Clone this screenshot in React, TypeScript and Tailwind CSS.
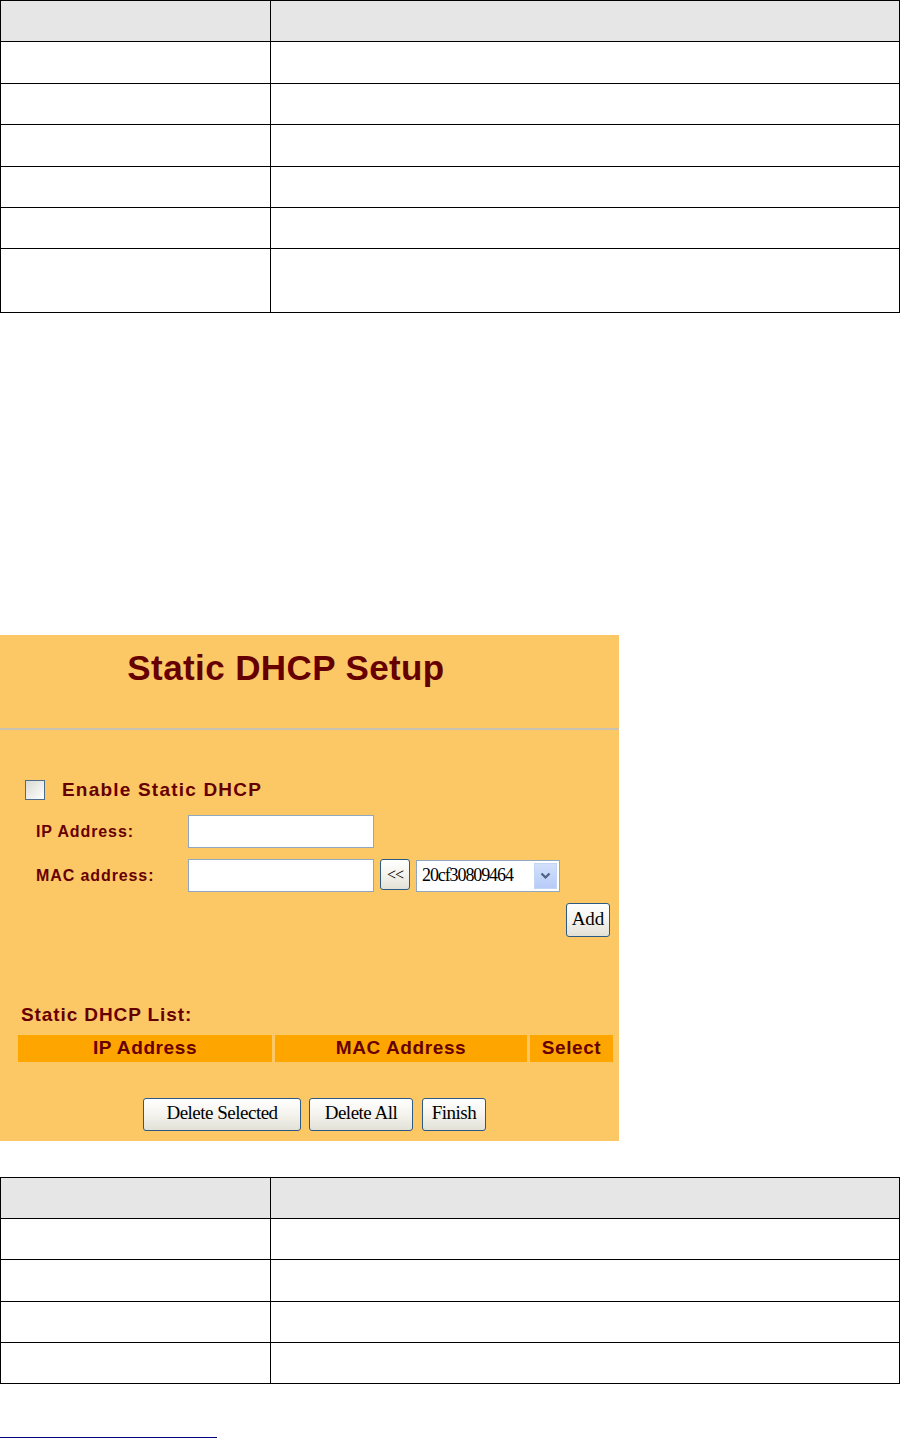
import React from "react";

// Empty two-column doc tables (text stripped in the screenshot)
type GridTableProps = {
  rows: string[]; // height classes, first is the header
};

const GridTable: React.FC<GridTableProps> = ({ rows }) => {
  return (
    <div className="w-[900px] border border-black">
      {rows.map((h, i) => (
        <div
          key={i}
          className={`flex ${h} ${i < rows.length - 1 ? "border-b border-black" : ""} ${
            i === 0 ? "bg-[#e6e6e6]" : "bg-white"
          }`}
        >
          <div className="w-[270px] shrink-0 border-r border-black" />
          <div className="flex-1" />
        </div>
      ))}
    </div>
  );
};

const XpButton: React.FC<{ label: string; className?: string }> = ({ label, className = "" }) => (
  <button
    type="button"
    className={`flex items-center justify-center rounded-[3px] border border-[#2d5a85] bg-gradient-to-b from-white via-[#f4f3ee] to-[#e3e1d6] text-black font-['Liberation_Serif',serif] leading-none ${className}`}
  >
    {label}
  </button>
);

const StaticDhcpPanel: React.FC = () => {
  const label = "text-[#660000] font-['Liberation_Sans',Arial,sans-serif] font-bold";

  return (
    <div className="w-[619px] h-[506px] bg-[#fcc866] flex flex-col">
      {/* title */}
      <div className="h-[93px] pt-[13px] pr-[47px] text-center">
        <h1 className={`${label} text-[35px] leading-[40px] tracking-[0.4px]`}>Static DHCP Setup</h1>
      </div>
      <div className="h-[2px] bg-[#c9c1b1]" />

      {/* enable */}
      <div className="mt-[50px] h-5 flex items-center pl-[25px]">
        <span className="w-5 h-5 border border-[#4b6d8d] bg-gradient-to-br from-[#d9d9d4] to-white" />
        <span className={`${label} ml-[17px] text-[19px] leading-[22px] tracking-[1.2px]`}>
          Enable Static DHCP
        </span>
      </div>

      {/* ip */}
      <div className="mt-[15px] h-[33px] flex items-center pl-[36px]">
        <span className={`${label} w-[152px] text-[16px] tracking-[0.9px]`}>IP Address:</span>
        <input className="w-[186px] h-[33px] border border-[#8fa7c0] bg-white outline-none" />
      </div>

      {/* mac */}
      <div className="mt-[11px] h-[33px] flex items-center pl-[36px]">
        <span className={`${label} w-[152px] text-[16px] tracking-[0.9px]`}>MAC address:</span>
        <input className="w-[186px] h-[33px] border border-[#8fa7c0] bg-white outline-none" />
        <XpButton label="<<" className="ml-[6px] w-[30px] h-[31px] text-[16px] tracking-[-1px] -mt-[2px]" />
        <div className="ml-[6px] w-[144px] h-[32px] border border-[#8fa7c0] bg-white flex items-center pl-[5px] pr-[2px]">
          <span className="flex-1 font-['Liberation_Serif',serif] text-[18px] tracking-[-1.1px] text-black">
            20cf30809464
          </span>
          <span className="w-[23px] h-[26px] bg-gradient-to-b from-[#d3e0fb] to-[#b6cbf7] border border-[#c4d4f5] flex items-center justify-center">
            <svg width="11" height="8" viewBox="0 0 11 8">
              <path d="M1.5 1.5 L5.5 5.5 L9.5 1.5" fill="none" stroke="#4d6185" strokeWidth="2.2" />
            </svg>
          </span>
        </div>
      </div>

      {/* add */}
      <div className="mt-[11px] h-[34px] flex justify-end pr-[9px]">
        <XpButton label="Add" className="w-[44px] h-[34px] text-[19px] pb-[3px]" />
      </div>

      {/* list */}
      <div className={`${label} mt-[67px] pl-[21px] text-[19px] leading-[22px] tracking-[0.9px]`}>
        Static DHCP List:
      </div>
      <div className="mt-[9px] ml-[18px] flex gap-[3px] h-[27px]">
        {[
          ["IP Address", "w-[254px]"],
          ["MAC Address", "w-[252px]"],
          ["Select", "w-[83px]"],
        ].map(([t, w]) => (
          <div key={t} className={`${w} bg-[#ffa500] flex items-center justify-center ${label} text-[19px] tracking-[0.6px]`}>
            {t}
          </div>
        ))}
      </div>

      {/* actions */}
      <div className="mt-[36px] h-[33px] flex pl-[143px] gap-[8px]">
        <XpButton label="Delete Selected" className="w-[158px] h-[33px] text-[19px] tracking-[-0.5px] pb-[4px]" />
        <XpButton label="Delete All" className="w-[104px] h-[33px] text-[19px] tracking-[-0.5px] pb-[4px]" />
        <XpButton label="Finish" className="ml-[1px] w-[64px] h-[33px] text-[19px] tracking-[-0.5px] pb-[4px]" />
      </div>
    </div>
  );
};

export default function App() {
  return (
    <div className="w-[900px] min-h-[1439px] bg-white">
      <GridTable rows={["h-[41px]", "h-[42px]", "h-[41px]", "h-[42px]", "h-[41px]", "h-[41px]", "h-[63px]"]} />

      <div className="mt-[322px]">
        <StaticDhcpPanel />
      </div>

      <div className="mt-[36px]">
        <GridTable rows={["h-[41px]", "h-[41px]", "h-[42px]", "h-[41px]", "h-[40px]"]} />
      </div>

      <div className="mt-[53px] w-[217px] h-px bg-[#000080]" />
    </div>
  );
}
